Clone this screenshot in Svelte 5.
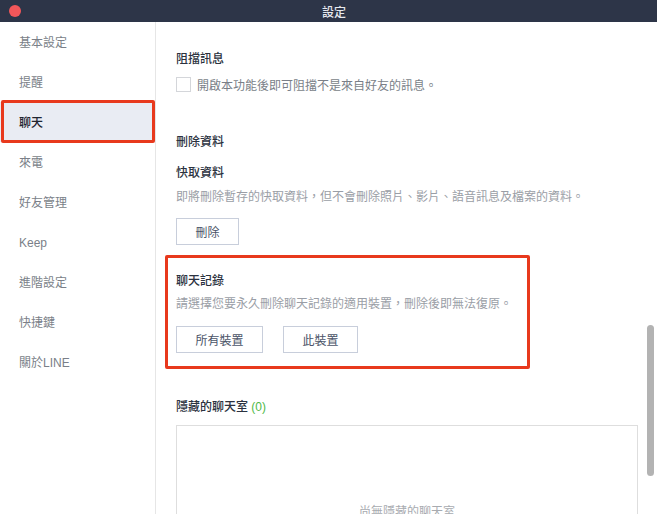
<script>
  const menu = ['基本設定', '提醒', '聊天', '來電', '好友管理', 'Keep', '進階設定', '快捷鍵', '關於LINE'];
  const active = '聊天';
</script>

<div class="window">
  <header class="titlebar">
    <span class="close"></span>
    <span class="title">設定</span>
  </header>

  <div class="body">
    <nav class="sidebar">
      {#each menu as item}
        <div class="navItem" class:active={item === active}>
          {item}
          {#if item === active}<span class="mark"></span>{/if}
        </div>
      {/each}
    </nav>

    <main class="content">
      <section class="blockMsg">
        <h3>阻擋訊息</h3>
        <label class="check">
          <span class="box"></span>
          開啟本功能後即可阻擋不是來自好友的訊息。
        </label>
      </section>

      <section class="deleteData">
        <h3>刪除資料</h3>
        <h3 class="sub">快取資料</h3>
        <p>即將刪除暫存的快取資料，但不會刪除照片、影片、語音訊息及檔案的資料。</p>
        <div class="buttons">
          <button class="wide">刪除</button>
        </div>
      </section>

      <section class="history">
        <span class="markBox"></span>
        <h3>聊天記錄</h3>
        <p>請選擇您要永久刪除聊天記錄的適用裝置，刪除後即無法復原。</p>
        <div class="buttons">
          <button class="all">所有裝置</button>
          <button class="this">此裝置</button>
        </div>
      </section>

      <section class="hidden">
        <h3>隱藏的聊天室 <span class="count">(0)</span></h3>
        <div class="emptyBox">尚無隱藏的聊天室</div>
      </section>

      <div class="scrollbar"></div>
    </main>
  </div>
</div>

<style>
  :global(body) {
    margin: 0;
    background: #fff;
  }

  .window {
    position: relative;
    width: 657px;
    height: 514px;
    overflow: hidden;
    font-family: "Liberation Sans", "Noto Sans CJK TC", sans-serif;
    font-size: 12px;
    color: #2b3240;
  }

  .titlebar {
    position: relative;
    height: 22px;
    background: #2d3548;
    display: flex;
    align-items: center;
    justify-content: center;
    padding-left: 11px;
  }

  .title {
    color: #e6e9ef;
    font-size: 12px;
    font-weight: 500;
  }

  .close {
    position: absolute;
    left: 9px;
    top: 5px;
    width: 12px;
    height: 12px;
    border-radius: 50%;
    background: #f2575a;
  }

  .body {
    display: flex;
    height: 492px;
  }

  .sidebar {
    width: 155px;
    flex: none;
    border-right: 1px solid #e6e6e6;
  }

  .navItem {
    position: relative;
    height: 40px;
    line-height: 42px;
    padding-left: 19px;
    color: #7a7f88;
  }

  .navItem.active {
    background: #e9ecf3;
    color: #1f2530;
    font-weight: 500;
  }

  .mark {
    position: absolute;
    left: 1px;
    right: 0;
    top: -2px;
    bottom: -1px;
    border: 3px solid #e8391d;
    border-radius: 2px;
  }

  .content {
    position: relative;
    flex: 1;
    padding-left: 20px;
    overflow: hidden;
  }

  h3 {
    margin: 0;
    font-size: 12px;
    line-height: 18px;
    font-weight: 500;
    color: #2b3240;
  }

  p {
    margin: 0;
    line-height: 18px;
    color: #9a9ea6;
  }

  .blockMsg {
    padding-top: 28px;
  }

  .check {
    display: flex;
    align-items: center;
    gap: 6px;
    margin-top: 8px;
    height: 16px;
    color: #7a7f88;
  }

  .box {
    width: 13px;
    height: 13px;
    border: 1px solid #d4d6da;
    background: #fff;
  }

  .deleteData {
    margin-top: 41px;
  }

  .sub {
    margin-top: 13px;
  }

  .deleteData p {
    margin-top: 6px;
  }

  .buttons {
    display: flex;
    gap: 20px;
    margin-top: 13px;
  }

  .deleteData .buttons {
    margin-top: 12px;
  }

  button {
    height: 27px;
    padding: 0;
    border: 1px solid #c8cedb;
    background: #fff;
    border-radius: 0;
    font: inherit;
    color: #4b5468;
  }

  .wide {
    width: 63px;
  }

  .all {
    width: 87px;
  }

  .this {
    width: 75px;
  }

  .history {
    position: relative;
    margin-top: 27px;
  }

  .history p {
    margin-top: 5px;
  }

  .markBox {
    position: absolute;
    left: -11px;
    top: -17px;
    width: 365px;
    height: 114px;
    box-sizing: border-box;
    border: 3px solid #e8391d;
    border-radius: 2px;
  }

  .hidden {
    margin-top: 45px;
  }

  .count {
    color: #4fb948;
    font-weight: 400;
  }

  .emptyBox {
    margin-top: 9px;
    width: 462px;
    height: 200px;
    box-sizing: border-box;
    border: 1px solid #dedede;
    padding-top: 76px;
    text-align: center;
    color: #a8abb0;
  }

  .scrollbar {
    position: absolute;
    right: 3px;
    top: 303px;
    width: 7px;
    height: 151px;
    border-radius: 4px;
    background: #b3b3b3;
  }
</style>
